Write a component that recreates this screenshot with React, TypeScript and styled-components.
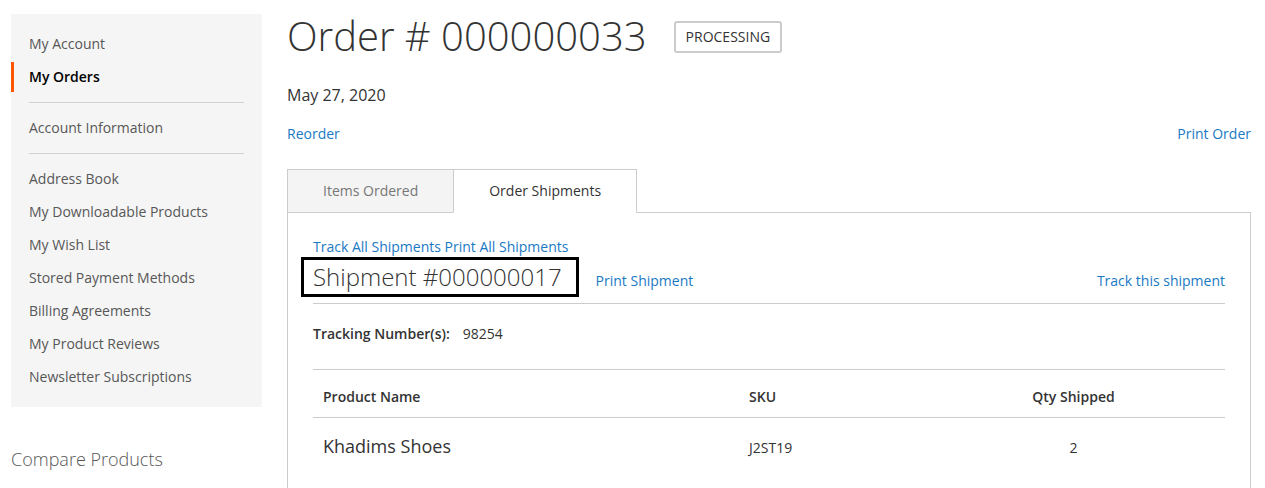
import React from "react";
import styled, { createGlobalStyle } from "styled-components";

const GlobalStyle = createGlobalStyle`
  html, body {
    margin: 0;
    padding: 0;
    overflow: hidden;
    background: #fff;
  }
  body {
    font-family: "Open Sans", "Liberation Sans", Arial, sans-serif;
    font-size: 14px;
    line-height: 20px;
    color: #333;
  }
  * { box-sizing: border-box; }
`;

const Page = styled.div`
  display: flex;
  align-items: flex-start;
  gap: 25px;
  padding: 14px 14px 0 11px;
  width: 1265px;
`;

const Sidebar = styled.aside`
  width: 251px;
  flex: 0 0 251px;
`;

const Nav = styled.nav`
  background: #f5f5f5;
  padding: 15px 0;
`;

const NavItem = styled.a<{ $current?: boolean }>`
  display: block;
  margin-top: 3px;
  padding: 5px 18px 5px 15px;
  border-left: 3px solid ${(p) => (p.$current ? "#ff5501" : "transparent")};
  color: ${(p) => (p.$current ? "#000" : "#575757")};
  font-weight: ${(p) => (p.$current ? 600 : 400)};
  font-size: 14px;
  line-height: 20px;
  text-decoration: none;
  &:first-child { margin-top: 0; }
`;

const Delimiter = styled.span`
  display: block;
  border-top: 1px solid #d1d1d1;
  margin: 10px 18px;
`;

const CompareTitle = styled.div`
  margin-top: 40px;
  font-size: 18px;
  line-height: 24px;
  font-weight: 300;
  color: #575757;
`;

const Main = styled.main`
  flex: 1;
  min-width: 0;
`;

const TitleRow = styled.div`
  display: flex;
  align-items: flex-start;
  gap: 27px;
`;

const PageTitle = styled.h1`
  margin: 0;
  font-size: 40px;
  line-height: 44px;
  font-weight: 300;
  color: #333;
`;

const Status = styled.span`
  margin-top: 7px;
  border: 2px solid #ccc;
  border-radius: 3px;
  padding: 2px 10px;
  font-size: 14px;
  line-height: 24px;
  text-transform: uppercase;
  color: #333;
`;

const OrderDate = styled.div`
  margin-top: 26px;
  font-size: 16px;
  line-height: 22px;
  color: #333;
`;

const ActionsRow = styled.div`
  margin-top: 18px;
  display: flex;
  justify-content: space-between;
`;

const Link = styled.a<{ $push?: boolean; $gap?: number }>`
  color: #1979c3;
  text-decoration: none;
  font-size: 14px;
  line-height: 20px;
  margin-left: ${(p) => (p.$push ? "auto" : p.$gap ? `${p.$gap}px` : "0")};
`;

const Tabs = styled.div`
  margin-top: 25px;
  display: flex;
`;

const Tab = styled.div<{ $active?: boolean }>`
  position: relative;
  z-index: ${(p) => (p.$active ? 1 : 0)};
  height: 44px;
  margin-bottom: -1px;
  padding: 0 35px;
  border: 1px solid #ccc;
  border-bottom-color: ${(p) => (p.$active ? "#fff" : "#ccc")};
  background: ${(p) => (p.$active ? "#fff" : "#f4f4f4")};
  color: ${(p) => (p.$active ? "#333" : "#777")};
  font-size: 14px;
  line-height: 42px;
  & + & { margin-left: -1px; }
`;

const Panel = styled.section`
  border: 1px solid #ccc;
  padding: 24px 25px 40px;
  min-height: 320px;
`;

const AllActions = styled.div`
  line-height: 20px;
`;

const ShipmentHead = styled.div`
  display: flex;
  align-items: baseline;
  padding-bottom: 6px;
  border-bottom: 1px solid #ccc;
`;

const ShipmentTitle = styled.strong`
  margin-left: -12px;
  padding: 0 14px 0 9px;
  border: 3px solid #000;
  font-size: 24px;
  line-height: 34px;
  font-weight: 300;
  color: #333;
`;

const Tracking = styled.div`
  margin-top: 20px;
  display: flex;
  gap: 13px;
  line-height: 20px;
`;

const TrackingLabel = styled.span`
  font-weight: 600;
`;

const Table = styled.div`
  margin-top: 25px;
  border-top: 1px solid #ccc;
`;

const Row = styled.div<{ $head?: boolean }>`
  display: grid;
  grid-template-columns: 426px 183px 1fr;
  align-items: baseline;
  border-bottom: ${(p) => (p.$head ? "1px solid #ccc" : "none")};
  padding: ${(p) => (p.$head ? "17px 0 10px" : "16px 0")};
`;

const Cell = styled.div<{ $center?: boolean; $bold?: boolean; $size?: number }>`
  padding: 0 10px;
  text-align: ${(p) => (p.$center ? "center" : "left")};
  font-weight: ${(p) => (p.$bold ? 600 : 400)};
  font-size: ${(p) => p.$size ?? 14}px;
  line-height: ${(p) => ((p.$size ?? 14) > 14 ? 24 : 20)}px;
  color: #333;
`;

const navItems = [
  "Address Book",
  "My Downloadable Products",
  "My Wish List",
  "Stored Payment Methods",
  "Billing Agreements",
  "My Product Reviews",
  "Newsletter Subscriptions",
];

export default function App() {
  return (
    <>
      <GlobalStyle />
      <Page>
        <Sidebar>
          <Nav>
            <NavItem href="#">My Account</NavItem>
            <NavItem as="strong" $current>
              My Orders
            </NavItem>
            <Delimiter />
            <NavItem href="#">Account Information</NavItem>
            <Delimiter />
            {navItems.map((t) => (
              <NavItem key={t} href="#">
                {t}
              </NavItem>
            ))}
          </Nav>
          <CompareTitle>Compare Products</CompareTitle>
        </Sidebar>
        <Main>
          <TitleRow>
            <PageTitle>Order # 000000033</PageTitle>
            <Status>Processing</Status>
          </TitleRow>
          <OrderDate>May 27, 2020</OrderDate>
          <ActionsRow>
            <Link href="#">Reorder</Link>
            <Link href="#">Print Order</Link>
          </ActionsRow>
          <Tabs>
            <Tab>Items Ordered</Tab>
            <Tab $active>Order Shipments</Tab>
          </Tabs>
          <Panel>
            <AllActions>
              <Link href="#">Track All Shipments</Link>{" "}
              <Link href="#">Print All Shipments</Link>
            </AllActions>
            <ShipmentHead>
              <ShipmentTitle>Shipment #000000017</ShipmentTitle>
              <Link href="#" $gap={17}>
                Print Shipment
              </Link>
              <Link href="#" $push>
                Track this shipment
              </Link>
            </ShipmentHead>
            <Tracking>
              <TrackingLabel>Tracking Number(s):</TrackingLabel>
              <span>98254</span>
            </Tracking>
            <Table>
              <Row $head>
                <Cell $bold>Product Name</Cell>
                <Cell $bold>SKU</Cell>
                <Cell $bold $center>
                  Qty Shipped
                </Cell>
              </Row>
              <Row>
                <Cell $size={18}>Khadims Shoes</Cell>
                <Cell>J2ST19</Cell>
                <Cell $center>2</Cell>
              </Row>
            </Table>
          </Panel>
        </Main>
      </Page>
    </>
  );
}
